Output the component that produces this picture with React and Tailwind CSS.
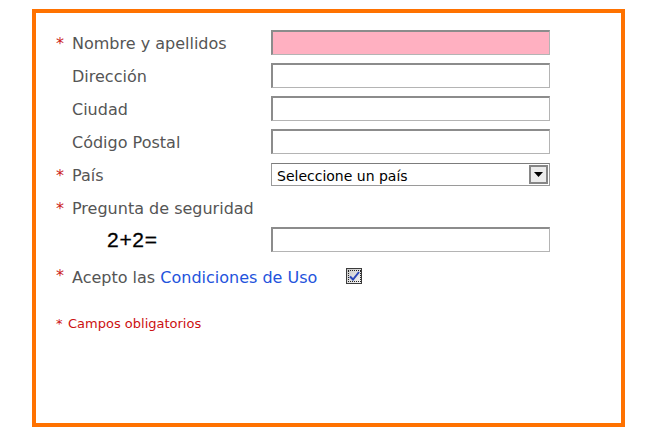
import React from "react";

const fields = [
  { label: "Nombre y apellidos", required: true, pink: true },
  { label: "Dirección" },
  { label: "Ciudad" },
  { label: "Código Postal" },
];

const Star = ({ className = "" }) => (
  <span className={`w-[16px] shrink-0 text-[#cc2222] ${className}`}>*</span>
);

const TextBox = ({ pink }) => (
  <div
    className={`h-[25px] w-[279px] border border-[#b4b4b4] border-t-2 border-l-2 border-t-[#8c8c8c] border-l-[#8c8c8c] ${
      pink ? "bg-[#ffb0c1]" : "bg-white"
    }`}
  />
);

const App = () => {
  return (
    <div className="w-[661px] h-[432px] bg-white pt-[9px] pl-[32px] font-['DejaVu_Sans',Verdana,sans-serif]">
      <div className="w-[593px] h-[418px] border-4 border-[#ff7200] pt-[17px] pl-[20px] text-[16px] text-[#555]">
        {/* Text fields */}
        <div className="flex flex-col gap-[8px]">
          {fields.map((f) => (
            <div key={f.label} className="flex items-center h-[25px]">
              <div className="w-[215px] flex items-center pt-[2px]">
                {f.required ? <Star /> : <span className="w-[16px]" />}
                <span className="whitespace-nowrap">{f.label}</span>
              </div>
              <TextBox pink={f.pink} />
            </div>
          ))}
        </div>

        {/* País */}
        <div className="flex items-center h-[23px] mt-[9px]">
          <div className="w-[215px] flex items-center pt-[2px]">
            <Star />
            <span>País</span>
          </div>
          <div className="h-[23px] w-[279px] border border-[#9a9a9a] border-t-[#7c7c7c] bg-white flex items-center justify-between">
            <span className="pl-[5px] pt-[3px] text-[14px] text-black">Seleccione un país</span>
            <span className="w-[19px] h-[19px] mr-[1px] border-2 border-[#868686] bg-[#ececec] flex items-center justify-center">
              <svg width="9" height="5" viewBox="0 0 9 5">
                <path d="M0 0h9L4.5 5z" fill="#000" />
              </svg>
            </span>
          </div>
        </div>

        {/* Pregunta de seguridad */}
        <div className="flex items-center h-[24px] mt-[10px] pt-[2px]">
          <Star />
          <span>Pregunta de seguridad</span>
        </div>
        <div className="flex items-center h-[25px] mt-[7px]">
          <div className="w-[215px] pl-[51px] text-[21px] tracking-[0.7px] text-black font-['Liberation_Sans',Arial,sans-serif] [-webkit-text-stroke:0.3px_#000]">
            2+2=
          </div>
          <TextBox />
        </div>

        {/* Condiciones */}
        <div className="flex items-center h-[25px] mt-[11px]">
          <Star className="self-start mt-[1px]" />
          <span className="whitespace-nowrap pt-[5px]">
            Acepto las <span className="text-[#2353dc]">Condiciones de Uso</span>
          </span>
          <span className="ml-[29px] w-[16px] h-[16px] border border-[#3c3c3c] bg-gradient-to-br from-[#c8c8c8] to-[#f4f4f4] p-[1px] flex">
            <span className="flex-1 border border-dotted border-[#222] flex items-center justify-center">
              <svg width="11" height="10" viewBox="0 0 11 10">
                <path d="M1 5.5l3 3L10 1" stroke="#2a46b8" strokeWidth="2" fill="none" />
              </svg>
            </span>
          </span>
        </div>

        {/* Footer note */}
        <div className="mt-[26px] text-[13px] text-[#cc1111] flex">
          <span className="w-[12px]">*</span>
          <span>Campos obligatorios</span>
        </div>
      </div>
    </div>
  );
};

export default App;
